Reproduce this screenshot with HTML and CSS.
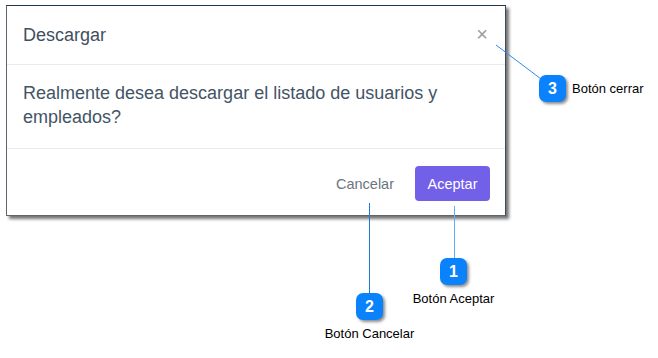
FILE: index.html
```html
<!DOCTYPE html>
<html lang="es">
<head>
<meta charset="utf-8">
<title>Descargar</title>
<link rel="stylesheet" href="styles.css">
</head>
<body>
<div class="canvas">
  <div class="modal">
    <div class="modal-header">
      <span class="modal-title">Descargar</span>
      <span class="close">&times;</span>
    </div>
    <div class="modal-body">Realmente desea descargar el listado de usuarios y empleados?</div>
    <div class="modal-footer">
      <span class="btn-cancel">Cancelar</span>
      <span class="btn-ok">Aceptar</span>
    </div>
  </div>

  <svg class="lines" width="658" height="358" viewBox="0 0 658 358">
    <line x1="496" y1="45" x2="545" y2="82" stroke="#2b8ef0" stroke-width="1"/>
    <line x1="454.5" y1="206" x2="454.5" y2="260" stroke="#5cb0f6" stroke-width="1"/>
    <line x1="369.5" y1="203" x2="369.5" y2="295" stroke="#1f78dc" stroke-width="1"/>
  </svg>

  <div class="callout callout-3">
    <span class="badge">3</span>
    <span class="label">Botón cerrar</span>
  </div>
  <div class="callout callout-1">
    <span class="badge">1</span>
    <span class="label">Botón Aceptar</span>
  </div>
  <div class="callout callout-2">
    <span class="badge">2</span>
    <span class="label">Botón Cancelar</span>
  </div>
</div>
</body>
</html>
```
FILE: styles.css
```css
html, body {
  margin: 0;
  padding: 0;
  background: #ffffff;
}

.canvas {
  position: relative;
  width: 658px;
  height: 358px;
  padding: 5px 0 0 6px;
  box-sizing: border-box;
  font-family: "Liberation Sans", Arial, sans-serif;
}

.modal {
  width: 500px;
  height: 211px;
  box-sizing: border-box;
  background: #ffffff;
  border: 1px solid #5f656c;
  border-top-color: #1d3854;
  border-right-color: #3a4a5c;
  box-shadow: 3px 3px 3px rgba(0, 0, 0, 0.55);
  display: flex;
  flex-direction: column;
}

.modal-header {
  height: 59px;
  box-sizing: border-box;
  padding: 0 16px 0 16px;
  display: flex;
  align-items: center;
  justify-content: space-between;
  border-bottom: 1px solid #e9ecef;
}

.modal-title {
  font-size: 18px;
  color: #3f4f5f;
  padding-top: 1px;
}

.close {
  font-size: 20px;
  color: #9a9a9a;
  line-height: 1;
  margin-right: 1px;
  margin-top: -2px;
}

.modal-body {
  height: 84px;
  box-sizing: border-box;
  padding: 16px 16px 0 16px;
  font-size: 18px;
  line-height: 24px;
  color: #435466;
  border-bottom: 1px solid #e9ecef;
}

.modal-footer {
  flex: 1;
  display: flex;
  align-items: center;
  justify-content: flex-end;
  gap: 21px;
  padding: 3px 15px 0 0;
}

.btn-cancel {
  font-size: 14.5px;
  color: #6c757d;
}

.btn-ok {
  width: 75px;
  height: 35px;
  box-sizing: border-box;
  display: flex;
  align-items: center;
  justify-content: center;
  background: #7360e9;
  color: #ffffff;
  border-radius: 4px;
  font-size: 14.5px;
}

.lines {
  position: absolute;
  left: 0;
  top: 0;
  pointer-events: none;
}

.callout {
  position: absolute;
  display: flex;
  align-items: center;
}

.badge {
  width: 27px;
  height: 27px;
  border-radius: 7px;
  background: #0a82fb;
  color: #ffffff;
  font-weight: bold;
  font-size: 16px;
  display: flex;
  align-items: center;
  justify-content: center;
  box-shadow: 2px 2px 3px rgba(0, 0, 0, 0.45);
}

.label {
  font-size: 13px;
  color: #000000;
  white-space: nowrap;
}

.callout-3 {
  left: 539px;
  top: 75px;
  gap: 6px;
}

.callout-1 {
  left: 403px;
  top: 258px;
  width: 101px;
  flex-direction: column;
  gap: 6px;
}

.callout-2 {
  left: 319px;
  top: 293px;
  width: 101px;
  flex-direction: column;
  gap: 6px;
}
```
